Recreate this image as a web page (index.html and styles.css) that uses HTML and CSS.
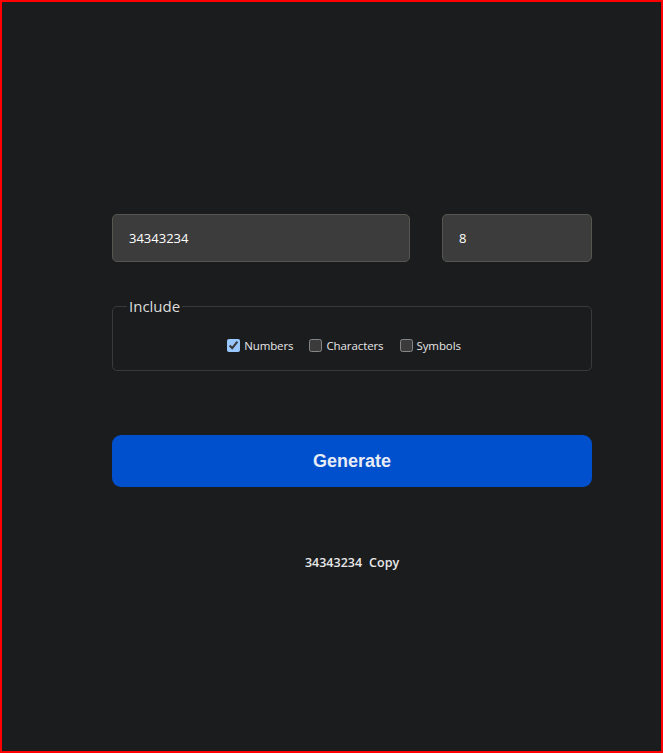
FILE: index.html
```html
<!DOCTYPE html>
<html lang="en">
<head>
<meta charset="utf-8">
<title>Password Generator</title>
<link rel="stylesheet" href="styles.css">
</head>
<body>
<main class="app">
  <div class="fields">
    <input class="field field-main" type="text" value="34343234">
    <input class="field field-len" type="text" value="8">
  </div>
  <fieldset class="include">
    <legend>Include</legend>
    <div class="options">
      <label class="opt"><input type="checkbox" checked><span>Numbers</span></label>
      <label class="opt"><input type="checkbox"><span>Characters</span></label>
      <label class="opt"><input type="checkbox"><span>Symbols</span></label>
    </div>
  </fieldset>
  <button class="generate" type="button">Generate</button>
  <div class="result"><span class="pw">34343234</span><span class="copy">Copy</span></div>
</main>
</body>
</html>
```
FILE: styles.css
```css
html, body { margin: 0; padding: 0; }
body {
  box-sizing: border-box;
  height: 753px;
  border: 2px solid #ff0000;
  background: #1b1c1e;
  color: #e8e8e8;
  font-family: "Open Sans", "Noto Sans", sans-serif;
  color-scheme: dark;
}
.app {
  width: 480px;
  margin-left: 110px;
  padding-top: 212px;
}
.fields {
  display: flex;
  gap: 32px;
}
.field {
  box-sizing: border-box;
  height: 48px;
  background: #3c3c3c;
  border: 1px solid #56554f;
  border-radius: 5px;
  color: #ffffff;
  font-family: "Open Sans", sans-serif;
  font-size: 13px;
  padding: 0 0 0 16px;
  outline: none;
}
.field-main { width: 298px; }
.field-len { width: 150px; }
.include {
  box-sizing: border-box;
  margin: 34px 0 0 0;
  padding: 0;
  height: 75px;
  border: 1px solid #3a3a3a;
  border-radius: 5px;
}
.include legend {
  margin-left: 14px;
  padding: 0 2px;
  font-size: 15px;
  color: #dcdcdc;
}
.options {
  display: flex;
  justify-content: center;
  gap: 16px;
  padding: 22px 16px 0 0;
  font-size: 11.5px;
  letter-spacing: -0.1px;
  color: #e6e6e6;
}
.opt {
  display: flex;
  align-items: center;
  gap: 4px;
}
.opt input {
  margin: 0;
  width: 13px;
  height: 13px;
}
.generate {
  display: block;
  box-sizing: border-box;
  width: 480px;
  height: 52px;
  margin-top: 64px;
  border: none;
  border-radius: 9px;
  background: #004fcd;
  color: #e8ecf5;
  font-family: "Liberation Sans", Arial, sans-serif;
  font-weight: 700;
  font-size: 18px;
}
.result {
  display: flex;
  justify-content: center;
  gap: 7px;
  margin-top: 67px;
  font-size: 12.5px;
  font-weight: 600;
  color: #e8e8e8;
}
```
